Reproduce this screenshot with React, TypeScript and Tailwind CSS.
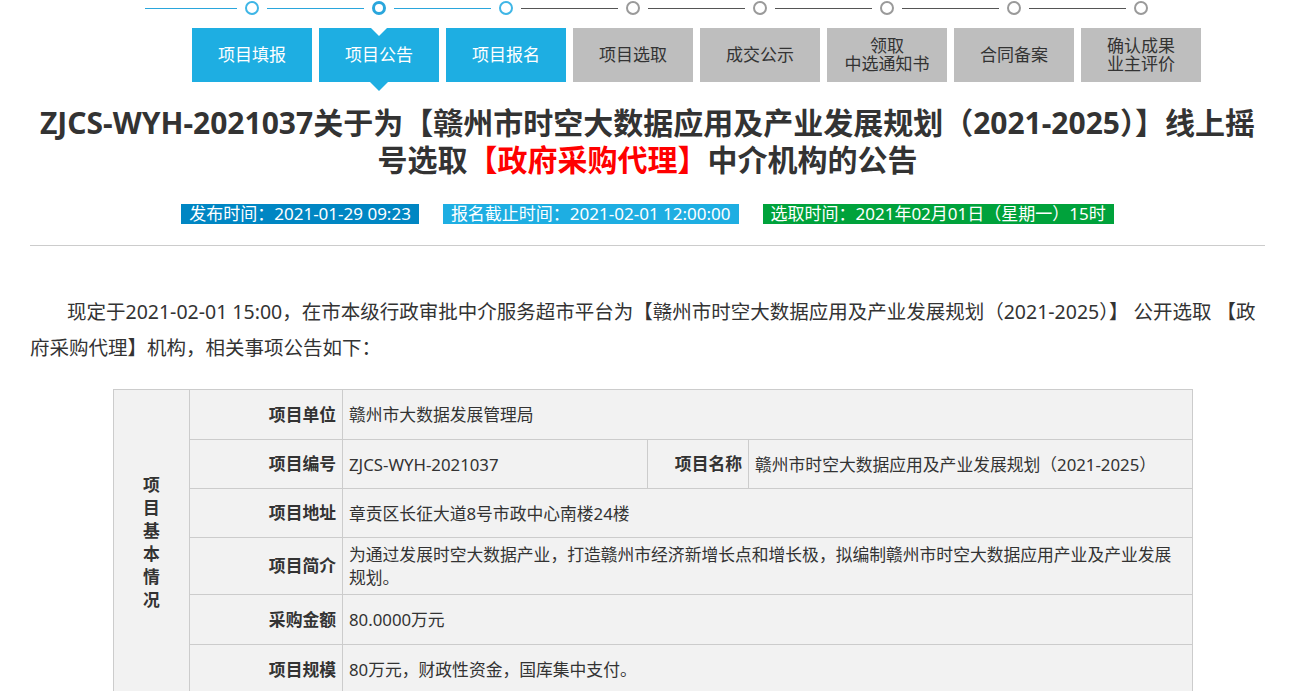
import React from "react";

const steps = [
  { label: "项目填报", done: true },
  { label: "项目公告", done: true, current: true },
  { label: "项目报名", done: true },
  { label: "项目选取" },
  { label: "成交公示" },
  { label: "领取\n中选通知书" },
  { label: "合同备案" },
  { label: "确认成果\n业主评价" },
];

function StepLine() {
  return (
    <div className="flex items-center pl-[145px] h-4">
      {steps.map((s, i) => (
        <div key={i} className="flex items-center">
          <div
            className={
              (i === 0 ? "w-[92px] " : "w-[97px] ml-[8px] ") +
              "h-px " +
              (s.done ? "bg-[#2aa6dc]" : "bg-[#555]")
            }
          />
          <div
            className={
              "ml-[8px] w-[14px] h-[14px] rounded-full bg-white " +
              (s.current
                ? "border-[3px] border-[#2aa6dc]"
                : s.done
                ? "border-2 border-[#3fb6e6]"
                : "border-2 border-[#9a9a9a]")
            }
          />
        </div>
      ))}
    </div>
  );
}

function StepBoxes() {
  return (
    <div className="flex gap-[7px] pl-[192px] mt-[12px]">
      {steps.map((s, i) => (
        <div
          key={i}
          className={
            "relative w-[120px] h-[54px] flex items-center justify-center text-center whitespace-pre-line text-[17px] leading-[18px] " +
            (s.done ? "bg-[#1eaee2] text-white" : "bg-[#bebebe] text-[#333]")
          }
        >
          {s.current && (
            <>
              <div className="absolute top-0 left-1/2 -translate-x-1/2 w-0 h-0 border-l-[8px] border-r-[8px] border-t-[8px] border-l-transparent border-r-transparent border-t-white" />
              <div className="absolute top-full left-1/2 -translate-x-1/2 w-0 h-0 border-l-[9px] border-r-[9px] border-t-[9px] border-l-transparent border-r-transparent border-t-[#1eaee2]" />
            </>
          )}
          {s.label}
        </div>
      ))}
    </div>
  );
}

function Label({ children }: { children: React.ReactNode }) {
  return (
    <td className="border border-[#ccc] text-right font-bold pr-[6px] text-[#333]">
      {children}
    </td>
  );
}

function Val({ children, span }: { children: React.ReactNode; span?: number }) {
  return (
    <td colSpan={span} className="border border-[#ccc] px-[6px] text-[#333] leading-[23px]">
      {children}
    </td>
  );
}

export default function App() {
  return (
    <div
      className="w-[1295px] bg-white text-[#333]"
      style={{ fontFamily: '"Noto Sans", "Noto Sans CJK SC", sans-serif' }}
    >
      <StepLine />
      <StepBoxes />

      <div className="px-[30px]">
        <h1 className="mt-[22px] text-center font-bold text-[30px] leading-[37px] text-[#333]">
          ZJCS-WYH-2021037关于为【赣州市时空大数据应用及产业发展规划（2021-2025）】线上摇号选取
          <span className="text-[#ff0000]">【政府采购代理】</span>中介机构的公告
        </h1>

        <div className="flex justify-center gap-[24px] mt-[26px] text-[17px] leading-[20px] text-white">
          <span className="bg-[#0086c3] px-[8px]">发布时间：2021-01-29 09:23</span>
          <span className="bg-[#1eaee2] px-[8px]">报名截止时间：2021-02-01 12:00:00</span>
          <span className="bg-[#00a23b] px-[8px]">选取时间：2021年02月01日（星期一）15时</span>
        </div>

        <div className="mt-[21px] h-px bg-[#ccc]" />

        <p className="mt-[48px] text-[19.5px] leading-[36px] indent-[37px] text-[#333]">
          现定于2021-02-01 15:00，在市本级行政审批中介服务超市平台为【赣州市时空大数据应用及产业发展规划（2021-2025）】 公开选取 【政府采购代理】机构，相关事项公告如下：
        </p>

        <table className="mt-[23px] ml-[83px] w-[1080px] table-fixed border-collapse bg-[#f2f2f2] text-[16.8px]">
          <colgroup>
            <col className="w-[76px]" />
            <col className="w-[153px]" />
            <col className="w-[305px]" />
            <col className="w-[101px]" />
            <col />
          </colgroup>
          <tbody>
            <tr className="h-[50px]">
              <td rowSpan={6} className="border border-[#ccc] text-center font-bold">
                <div className="flex flex-col items-center leading-[23px]">
                  {"项目基本情况".split("").map((c, i) => (
                    <span key={i}>{c}</span>
                  ))}
                </div>
              </td>
              <Label>项目单位</Label>
              <Val span={3}>赣州市大数据发展管理局</Val>
            </tr>
            <tr className="h-[49px]">
              <Label>项目编号</Label>
              <Val>ZJCS-WYH-2021037</Val>
              <Label>项目名称</Label>
              <Val>赣州市时空大数据应用及产业发展规划（2021-2025）</Val>
            </tr>
            <tr className="h-[49px]">
              <Label>项目地址</Label>
              <Val span={3}>章贡区长征大道8号市政中心南楼24楼</Val>
            </tr>
            <tr className="h-[57px]">
              <Label>项目简介</Label>
              <Val span={3}>
                为通过发展时空大数据产业，打造赣州市经济新增长点和增长极，拟编制赣州市时空大数据应用产业及产业发展规划。
              </Val>
            </tr>
            <tr className="h-[50px]">
              <Label>采购金额</Label>
              <Val span={3}>80.0000万元</Val>
            </tr>
            <tr className="h-[50px]">
              <Label>项目规模</Label>
              <Val span={3}>80万元，财政性资金，国库集中支付。</Val>
            </tr>
          </tbody>
        </table>
      </div>
    </div>
  );
}
